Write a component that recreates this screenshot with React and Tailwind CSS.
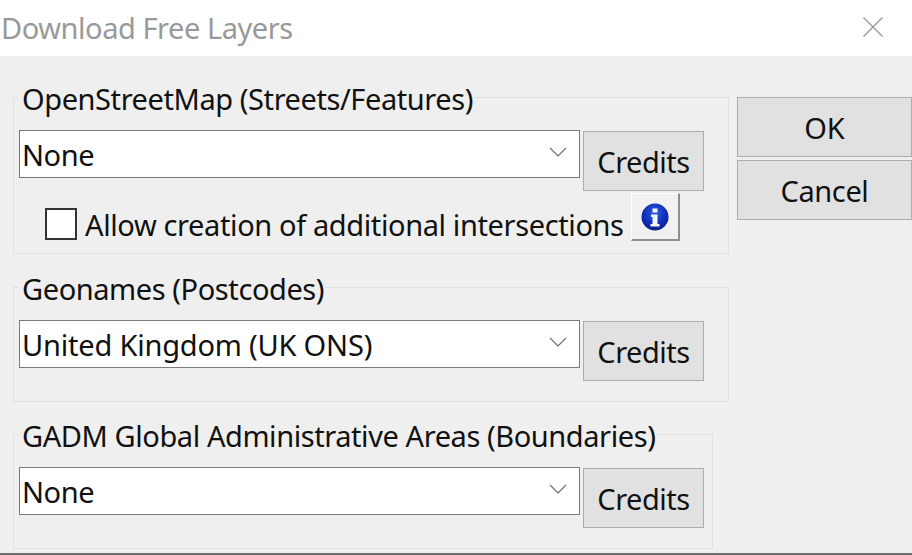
import React from "react";

const font = "font-['Noto_Sans','Open_Sans',sans-serif]";

function Chevron() {
  return (
    <svg width="18" height="10" viewBox="0 0 18 10" className="shrink-0 mr-[12px] -mt-[5px]">
      <polyline points="1,1 9,9 17,1" fill="none" stroke="#6a6a6a" strokeWidth="1.1" />
    </svg>
  );
}

function Combo({ value, tracking = "tracking-[-0.42px]" }) {
  return (
    <div className="w-[561px] h-[48px] shrink-0 bg-white border border-[#7a7a7a] flex items-center justify-between pl-[2px]">
      <span className={`leading-none ${tracking}`}>{value}</span>
      <Chevron />
    </div>
  );
}

function Credits() {
  return (
    <button className="w-[121px] h-[60px] mt-[1px] shrink-0 bg-[#e1e1e1] border border-[#adadad] leading-none tracking-[-0.5px]">
      Credits
    </button>
  );
}

function Group({ title, className, children, extra }) {
  return (
    <div className={`ml-[13px] border border-[#e0e0e0] pl-[5px] ${className}`}>
      <div className="h-[32px] -mt-[16px] -ml-[1px] flex">
        <span className="h-[32px] pl-[4px] pr-[1px] bg-[#efefef] leading-[34px] tracking-[-0.42px] whitespace-nowrap">{title}</span>
      </div>
      <div className="mt-[16px] flex items-start gap-[3px]">{children}</div>
      {extra}
    </div>
  );
}

function InfoIcon() {
  return (
    <svg width="28" height="28" viewBox="0 0 28 28">
      <defs>
        <radialGradient id="blue" cx="0.5" cy="0.35" r="0.65">
          <stop offset="0" stopColor="#2f5fe0" />
          <stop offset="0.65" stopColor="#0f2db8" />
          <stop offset="1" stopColor="#0a1f8a" />
        </radialGradient>
      </defs>
      <circle cx="14" cy="14" r="13.5" fill="url(#blue)" />
      <path d="M11.5 5.5h5v4h-5z M10 11.5h6.5v9.5h2v2.5h-9V21h2v-7H10z" fill="#f4f6ff" />
    </svg>
  );
}

export default function App() {
  const checkboxRow = (
    <div className="mt-[2px] ml-[26px] flex items-start">
      <div className="w-[32px] h-[32px] mt-[15px] shrink-0 bg-white border-2 border-[#333]" />
      <span className="ml-[8px] mt-[17px] leading-none tracking-[-0.38px] whitespace-nowrap">Allow creation of additional intersections</span>
      <button className="ml-[7px] w-[49px] h-[48px] shrink-0 flex items-center justify-center bg-[#f1f1f1] border-t border-l border-t-white border-l-white border-r-2 border-b-2 border-r-[#8f8f8f] border-b-[#8f8f8f]">
        <InfoIcon />
      </button>
    </div>
  );

  return (
    <div className={`w-[912px] h-[555px] overflow-hidden flex flex-col bg-[#efefef] text-[29px] text-[#111] ${font}`}>
      <header className="h-[56px] shrink-0 bg-white flex items-center justify-between pl-[1px] pr-[28px]">
        <span className="text-[29px] text-[#999] tracking-[-0.45px] leading-none -mt-[2px]">Download Free Layers</span>
        <svg width="22" height="20" viewBox="0 0 22 20" className="-mt-[3px]">
          <path d="M1.5 0.5 L20.5 19.5 M20.5 0.5 L1.5 19.5" stroke="#9a9a9a" strokeWidth="1.4" fill="none" />
        </svg>
      </header>

      <main className="flex-1 flex items-start">
        <div className="w-[737px] shrink-0 flex flex-col">
          <Group title="OpenStreetMap (Streets/Features)" className="mt-[41px] w-[716px] h-[157px]" extra={checkboxRow}>
            <Combo value="None" />
            <Credits />
          </Group>
          <Group title="Geonames (Postcodes)" className="mt-[33px] w-[716px] h-[115px]">
            <Combo value="United Kingdom (UK ONS)" tracking="tracking-[-0.2px]" />
            <Credits />
          </Group>
          <Group title="GADM Global Administrative Areas (Boundaries)" className="mt-[32px] w-[700px] h-[115px]">
            <Combo value="None" />
            <Credits />
          </Group>
        </div>

        <div className="flex-1 flex flex-col gap-[3px] mt-[41px]">
          <button className="h-[60px] bg-[#e1e1e1] border border-[#adadad] leading-none">OK</button>
          <button className="h-[60px] bg-[#e1e1e1] border border-[#adadad] leading-none tracking-[-0.4px]">Cancel</button>
        </div>
      </main>

      <div className="h-[2px] shrink-0 bg-[#6e6e6e]" />
    </div>
  );
}
